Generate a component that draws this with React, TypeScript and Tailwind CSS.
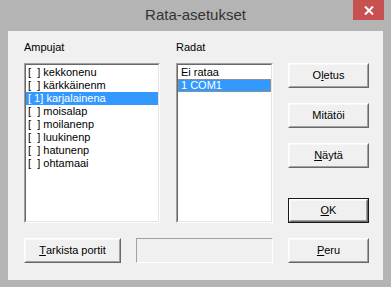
import React from "react"

const ampujat = [
  { nimi: "kekkonenu", rata: "  " },
  { nimi: "kärkkäinenm", rata: "  " },
  { nimi: "karjalainena", rata: " 1" },
  { nimi: "moisalap", rata: "  " },
  { nimi: "moilanenp", rata: "  " },
  { nimi: "luukinenp", rata: "  " },
  { nimi: "hatunenp", rata: "  " },
  { nimi: "ohtamaai", rata: "  " },
]

const radat = ["Ei rataa", "1 COM1"]

function ListBox({ children, className }: { children: React.ReactNode; className: string }) {
  return (
    <div className={`border border-t-[#a0a0a0] border-l-[#a0a0a0] border-b-white border-r-white ${className}`}>
      <div className="h-full border border-t-[#696969] border-l-[#696969] border-b-[#e3e3e3] border-r-[#e3e3e3] bg-white">
        {children}
      </div>
    </div>
  )
}

function WinButton({
  children,
  isDefault,
  className = "w-[81px]",
}: {
  children: React.ReactNode
  isDefault?: boolean
  className?: string
}) {
  return (
    <div className={`h-[25px] ${isDefault ? "border border-[#1a1a1a]" : ""} ${className}`}>
      <div className="h-full border border-t-white border-l-white border-b-[#696969] border-r-[#696969]">
        <div className="h-full flex items-center justify-center border border-t-[#f8f8f8] border-l-[#f8f8f8] border-b-[#a0a0a0] border-r-[#a0a0a0] bg-[#f0f0f0] text-black">
          {children}
        </div>
      </div>
    </div>
  )
}

export default function App() {
  return (
    <div className="w-[391px] h-[287px] bg-[#b4b4b4] flex flex-col font-['Liberation_Sans',Arial,sans-serif] text-[11px] select-none">
      {/* Otsikkopalkki */}
      <div className="h-[31px] grid grid-cols-[1fr_auto_1fr]">
        <div />
        <div className="pt-[6px] text-[15px] leading-[18px] text-[#333333]">Rata-asetukset</div>
        <div className="flex justify-end pr-[7px]">
          <div className="w-[31px] h-[20px] bg-[#c75050] flex items-center justify-center">
            <svg width="10" height="9" viewBox="0 0 10 9">
              <path d="M1 0.5 L9 8.5 M9 0.5 L1 8.5" stroke="white" strokeWidth="2" />
            </svg>
          </div>
        </div>
      </div>

      {/* Sisältö */}
      <div className="mx-[8px] h-[249px] bg-[#f0f0f0] pt-[10px] pl-[16px] flex flex-col">
        <div className="flex h-[182px]">
          <div className="w-[136px] flex flex-col">
            <div className="h-[22px] leading-[13px] text-black">Ampujat</div>
            <ListBox className="h-[161px]">
              <div className="pt-[1px]">
                {ampujat.map((a, i) => (
                  <div
                    key={i}
                    className={`h-[13px] leading-[13px] pl-[2px] whitespace-pre ${
                      i === 2 ? "bg-[#3399ff] text-white" : "text-black"
                    }`}
                  >
                    [{a.rata}] {a.nimi}
                  </div>
                ))}
              </div>
            </ListBox>
          </div>

          <div className="w-[97px] ml-[16px] flex flex-col">
            <div className="h-[22px] leading-[13px] text-black">Radat</div>
            <ListBox className="h-[161px]">
              <div className="pt-[1px]">
                {radat.map((r, i) => (
                  <div
                    key={i}
                    className={`h-[13px] leading-[11px] pl-[2px] whitespace-pre ${
                      i === 1
                        ? "bg-[#3399ff] text-white border border-dotted border-[#e0892a]"
                        : "text-black border border-transparent"
                    }`}
                  >
                    {r}
                  </div>
                ))}
              </div>
            </ListBox>
          </div>

          <div className="ml-[15px] pt-[22px] flex flex-col">
            <WinButton>
              O<span className="underline">l</span>etus
            </WinButton>
            <div className="mt-[15px]">
              <WinButton>Mitätöi</WinButton>
            </div>
            <div className="mt-[15px]">
              <WinButton>
                <span className="underline">N</span>äytä
              </WinButton>
            </div>
            <div className="mt-auto">
              <WinButton isDefault>
                <span className="underline">O</span>K
              </WinButton>
            </div>
          </div>
        </div>

        <div className="flex mt-[15px]">
          <WinButton className="w-[97px]">
            <span className="underline">T</span>arkista portit
          </WinButton>
          <div className="ml-[15px] w-[137px] h-[25px] border border-t-[#a0a0a0] border-l-[#a0a0a0] border-b-white border-r-white" />
          <div className="ml-[15px]">
            <WinButton>
              <span className="underline">P</span>eru
            </WinButton>
          </div>
        </div>
      </div>
    </div>
  )
}
